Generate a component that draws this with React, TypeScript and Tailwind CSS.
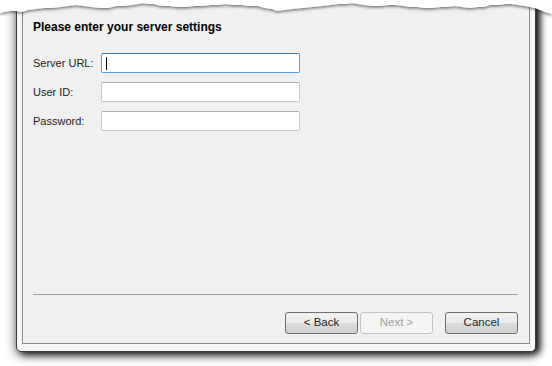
const tornEdge =
  'M0,0 L552,0 L552,14 L545,12 L540,10 L535,8 L530,7 L525,6 L518,5 L512,4 L505,4 L498,5 L490,5 L484,7 L478,7 L470,8 L462,7 L455,6 L447,7 L440,7 L432,8 L424,8 L418,7 L410,7 L404,6 L396,5 L388,5 L380,6 L372,6 L364,5 L358,4 L352,3 L346,4 L338,4 L330,5 L322,6 L312,7 L302,8 L292,9 L284,10 L277,11 L272,9 L265,8 L258,6 L250,6 L242,5 L234,5 L226,4 L218,5 L210,5 L202,6 L194,6 L186,7 L178,7 L170,6 L162,6 L154,4 L148,4 L143,3 L138,4 L132,5 L124,6 L116,6 L108,8 L100,8 L92,7 L84,6 L76,5 L68,6 L60,7 L52,8 L44,8 L36,9 L28,10 L22,12 L16,11 L10,11 L4,12 L0,13 Z';

function TornTop() {
  return (
    <svg
      className="pointer-events-none absolute top-0 left-0"
      width="552"
      height="30"
      viewBox="0 0 552 30"
    >
      <defs>
        <filter id="tornShadow" x="-5%" y="-50%" width="110%" height="200%">
          <feDropShadow dx="0" dy="1.5" stdDeviation="1.6" floodColor="#000" floodOpacity="0.55" />
        </filter>
      </defs>
      <path d={tornEdge} fill="#ffffff" filter="url(#tornShadow)" />
    </svg>
  );
}

function Field({ label, focused }: { label: string; focused?: boolean }) {
  return (
    <div className="flex items-center">
      <span className="w-[68px] text-[11px] text-[#1e1e1e]">{label}</span>
      <div
        className={
          focused
            ? 'relative h-[20px] w-[199px] rounded-[2px] border border-[#569de5] border-t-[#3d7bad] bg-white'
            : 'h-[20px] w-[199px] rounded-[2px] border border-[#c5c9ce] border-t-[#abadb3] bg-white'
        }
      >
        {focused && <div className="absolute top-[3px] left-[4px] h-[13px] w-px bg-black" />}
      </div>
    </div>
  );
}

function WizardButton({
  label,
  disabled,
  className = '',
}: {
  label: string;
  disabled?: boolean;
  className?: string;
}) {
  return (
    <button
      className={
        (disabled
          ? 'flex h-[22px] w-[73px] items-center justify-center rounded-[3px] border border-[#c0c4c7] bg-[#f4f4f4] text-[11.5px] text-[#a0a0a0]'
          : 'flex h-[22px] w-[73px] items-center justify-center rounded-[3px] border border-[#707070] bg-[linear-gradient(#f2f2f2_0%,#ebebeb_50%,#dddddd_50%,#cfcfcf_100%)] text-[11.5px] text-[#1e1e1e]') +
        ' ' +
        className
      }
    >
      {label}
    </button>
  );
}

export default function App() {
  return (
    <div
      className="relative h-[366px] w-[552px] overflow-hidden bg-white"
      style={{ fontFamily: '"Liberation Sans", Arial, sans-serif' }}
    >
      <div className="ml-[16px] mt-[-20px] flex h-[372px] w-[520px] flex-col rounded-b-[5px] border border-[#3c3c3c] bg-[#f7f7f7] px-[5px] pb-[7px] shadow-[4px_2px_7px_rgba(0,0,0,0.9),0_3px_12px_rgba(0,0,0,0.55)]">
        <div className="flex flex-1 flex-col border border-[#8c8c8c] bg-[#f0f0f0] pt-[36px] pl-[10px] pr-[11px]">
          <h1 className="text-[12px] font-bold text-black">Please enter your server settings</h1>
          <div className="mt-[17px] flex flex-col gap-[9px]">
            <Field label="Server URL:" focused />
            <Field label="User ID:" />
            <Field label="Password:" />
          </div>
          <div className="mt-auto border-t border-[#a0a0a0]" />
          <div className="mt-[17px] mb-[9px] flex justify-end">
            <WizardButton label="< Back" />
            <WizardButton label="Next >" disabled className="ml-[2px]" />
            <WizardButton label="Cancel" className="ml-[12px]" />
          </div>
        </div>
      </div>
      <TornTop />
    </div>
  );
}
